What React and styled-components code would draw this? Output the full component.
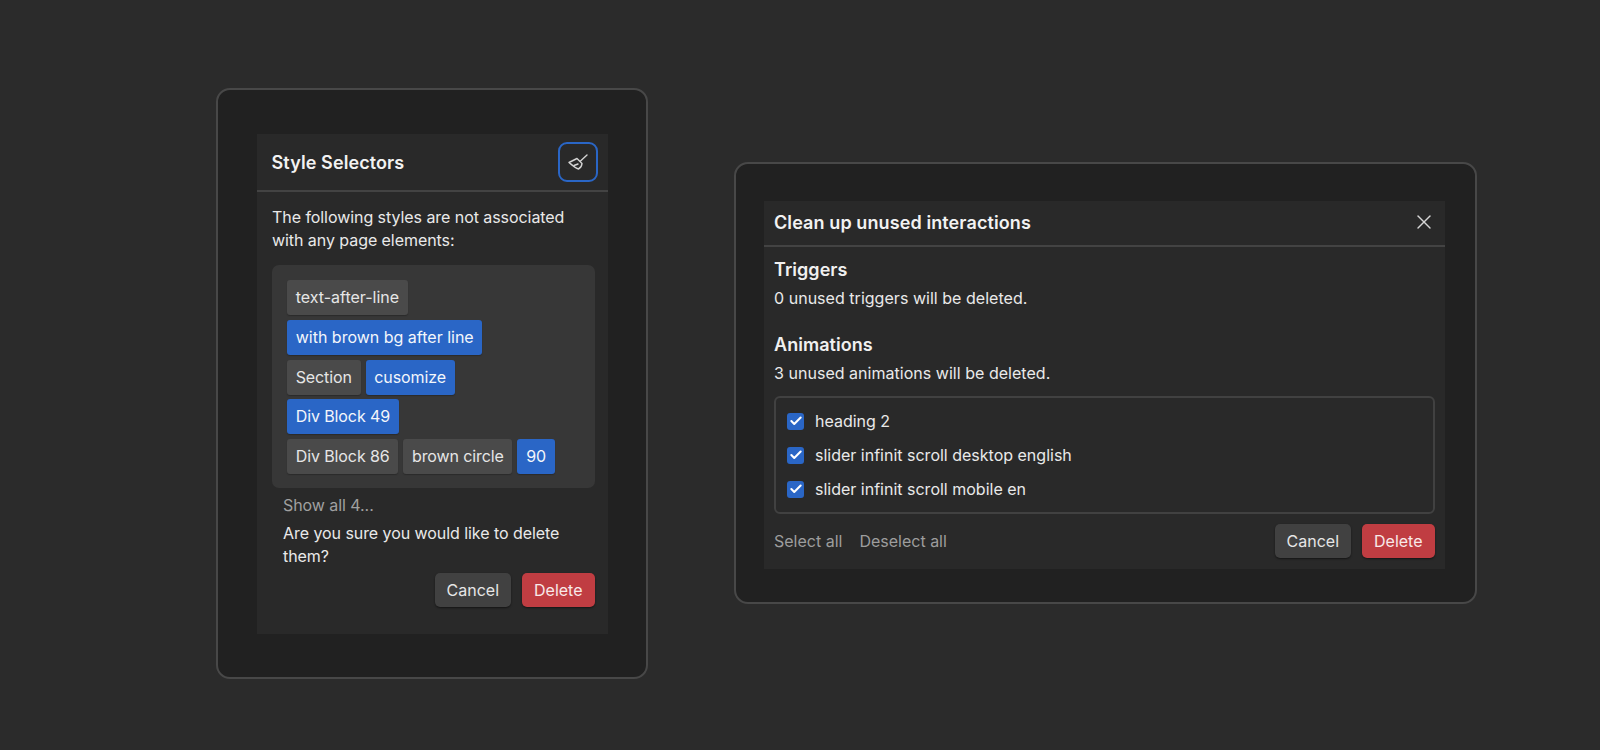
import React from "react";
import styled, { createGlobalStyle } from "styled-components";
import { X, Check } from "lucide-react";

const GlobalStyle = createGlobalStyle`
  html, body {
    margin: 0;
    height: 100%;
    background: #2b2b2b;
  }
  body {
    font-family: Inter, "Liberation Sans", sans-serif;
    color: #e9e9e9;
    font-size: 16px;
    line-height: 23px;
  }
`;

const Page = styled.div`
  width: 1600px;
  height: 750px;
  box-sizing: border-box;
  padding-left: 216px;
  display: flex;
  align-items: flex-start;
  gap: 86px;
  overflow: hidden;
`;

const Frame = styled.section`
  box-sizing: border-box;
  flex: none;
  width: ${({ $w }) => $w}px;
  height: ${({ $h }) => $h}px;
  margin-top: ${({ $mt }) => $mt}px;
  padding: ${({ $pt }) => $pt}px 0 0 ${({ $pl }) => $pl}px;
  background: #212121;
  border: 2px solid #484848;
  border-radius: 14px;
`;

const Panel = styled.div`
  width: ${({ $w }) => $w}px;
  height: ${({ $h }) => $h}px;
  background: #292929;
  display: flex;
  flex-direction: column;
`;

const Header = styled.header`
  box-sizing: border-box;
  height: ${({ $h }) => $h}px;
  flex: none;
  display: flex;
  align-items: center;
  justify-content: space-between;
  padding: 0 ${({ $pr }) => $pr}px ${({ $pb }) => $pb || 0}px ${({ $pl }) => $pl}px;
  border-bottom: 2px solid #434343;
`;

const Title = styled.h2`
  margin: 0;
  font-size: 18px;
  font-weight: 600;
  letter-spacing: 0.1px;
  color: #f2f2f2;
`;

const IconButton = styled.button`
  box-sizing: border-box;
  width: 40px;
  height: 40px;
  padding: 0;
  display: flex;
  align-items: center;
  justify-content: center;
  background: transparent;
  border: 2px solid #2a66c6;
  border-radius: 9px;
  color: #d4d4d4;
`;

const CloseButton = styled.button`
  padding: 0;
  display: flex;
  background: none;
  border: 0;
  color: #d6d6d6;
`;

const Body = styled.div`
  padding: 14px 13px 0 15px;
  display: flex;
  flex-direction: column;
  letter-spacing: -0.06px;
`;

const Text = styled.p`
  margin: 0;
  line-height: 22.5px;
`;

const TagBox = styled.div`
  margin-top: 14px;
  box-sizing: border-box;
  height: 223px;
  background: #373737;
  border-radius: 7px;
  padding: 15px;
  display: flex;
  flex-direction: column;
  gap: 4.75px;
`;

const TagRow = styled.div`
  display: flex;
  gap: 5px;
  letter-spacing: ${({ $tight }) => ($tight ? "-0.1px" : "0")};
`;

const Tag = styled.span`
  box-sizing: border-box;
  height: 35px;
  padding: 0 8.7px;
  display: flex;
  align-items: center;
  background: ${({ $blue }) => ($blue ? "#2a66c6" : "#4a4a4a")};
  color: ${({ $blue }) => ($blue ? "#f3f6fb" : "#e6e6e6")};
  border-radius: 3px;
  box-shadow: 0 1px 1px rgba(20, 20, 20, 0.35);
`;

const Indented = styled.div`
  padding-left: 11px;
`;

const ShowAll = styled.div`
  margin-top: 6px;
  color: #a0a0a0;
`;

const Question = styled(Text)`
  margin-top: 5px;
`;

const Actions = styled.div`
  display: flex;
  align-items: center;
  gap: 11px;
`;

const RightActions = styled(Actions)`
  justify-content: flex-end;
  margin-top: ${({ $mt }) => $mt || 0}px;
`;

const Button = styled.button`
  box-sizing: border-box;
  height: 34px;
  padding: 0 ${({ $danger }) => ($danger ? 12.5 : 11.5)}px;
  font: inherit;
  color: ${({ $danger }) => ($danger ? "#f8e9e9" : "#e6e6e6")};
  background: ${({ $danger }) => ($danger ? "#c03d42" : "#414141")};
  border: 0;
  border-radius: 5px;
  box-shadow: 0 1px 2px rgba(0, 0, 0, 0.5);
`;

const SubBody = styled.div`
  padding: 11px 10px 0;
  display: flex;
  flex-direction: column;
`;

const SubTitle = styled.h3`
  margin: ${({ $mt }) => $mt || 0}px 0 6px;
  font-size: 18px;
  font-weight: 600;
  letter-spacing: 0.05px;
  color: #f0f0f0;
`;

const Note = styled.p`
  margin: 0;
  letter-spacing: 0.03px;
`;

const CheckList = styled.ul`
  list-style: none;
  margin: 11px 0 0;
  box-sizing: border-box;
  height: 118px;
  padding: 6px 11px;
  border: 2px solid #414141;
  border-radius: 6px;
  display: flex;
  flex-direction: column;
  justify-content: space-around;
`;

const CheckRow = styled.li`
  display: flex;
  align-items: center;
  gap: 11px;
`;

const CheckMark = styled.span`
  width: 17px;
  height: 17px;
  border-radius: 3px;
  background: #2a66c6;
  color: #fff;
  display: flex;
  align-items: center;
  justify-content: center;
`;

const Footer = styled.div`
  margin-top: 10px;
  display: flex;
  align-items: center;
  justify-content: space-between;
`;

const Links = styled.div`
  display: flex;
  gap: 17px;
  color: #9d9d9d;
`;

const BroomIcon = () => (
  <svg width="20" height="16" viewBox="0 0 20 16" fill="none" stroke="currentColor" strokeWidth="1.4" strokeLinejoin="round" strokeLinecap="round">
    <path d="M19 1 L12.5 7" />
    <path d="M1 8.5 L9 4.5 L14 9.5 C13.8 11.8 12.5 14 10.5 15 C8 14.6 5.5 12.2 1 8.5 Z" />
    <path d="M6 11.5 L10 10" />
  </svg>
);

const tagRows = [
  [["text-after-line"]],
  [["with brown bg after line", true]],
  [["Section"], ["cusomize", true]],
  [["Div Block 49", true]],
  [["Div Block 86"], ["brown circle"], ["90", true]],
];

const animations = ["heading 2", "slider infinit scroll desktop english", "slider infinit scroll mobile en"];

export default function App() {
  return (
    <>
      <GlobalStyle />
      <Page>
        <Frame $w={432} $h={591} $mt={88} $pt={44} $pl={39}>
          <Panel $w={351} $h={500}>
            <Header $h={58} $pl={14.5} $pr={10}>
              <Title>Style Selectors</Title>
              <IconButton aria-label="Clean up">
                <BroomIcon />
              </IconButton>
            </Header>
            <Body>
              <Text>The following styles are not associated with any page elements:</Text>
              <TagBox>
                {tagRows.map((row, i) => (
                  <TagRow key={i} $tight={i > 1}>
                    {row.map(([label, blue]) => (
                      <Tag key={label} $blue={blue}>{label}</Tag>
                    ))}
                  </TagRow>
                ))}
              </TagBox>
              <Indented>
                <ShowAll>Show all 4...</ShowAll>
                <Question>Are you sure you would like to delete them?</Question>
              </Indented>
              <RightActions $mt={6}>
                <Button>Cancel</Button>
                <Button $danger>Delete</Button>
              </RightActions>
            </Body>
          </Panel>
        </Frame>
        <Frame $w={743} $h={442} $mt={162} $pt={37} $pl={28}>
          <Panel $w={681} $h={368}>
            <Header $h={46} $pl={10} $pr={9} $pb={2}>
              <Title>Clean up unused interactions</Title>
              <CloseButton aria-label="Close">
                <X size={24} strokeWidth={1.4} />
              </CloseButton>
            </Header>
            <SubBody>
              <SubTitle>Triggers</SubTitle>
              <Note>0 unused triggers will be deleted.</Note>
              <SubTitle $mt={23}>Animations</SubTitle>
              <Note>3 unused animations will be deleted.</Note>
              <CheckList>
                {animations.map((name) => (
                  <CheckRow key={name}>
                    <CheckMark>
                      <Check size={14} strokeWidth={3.5} />
                    </CheckMark>
                    {name}
                  </CheckRow>
                ))}
              </CheckList>
              <Footer>
                <Links>
                  <span>Select all</span>
                  <span>Deselect all</span>
                </Links>
                <Actions>
                  <Button>Cancel</Button>
                  <Button $danger>Delete</Button>
                </Actions>
              </Footer>
            </SubBody>
          </Panel>
        </Frame>
      </Page>
    </>
  );
}
